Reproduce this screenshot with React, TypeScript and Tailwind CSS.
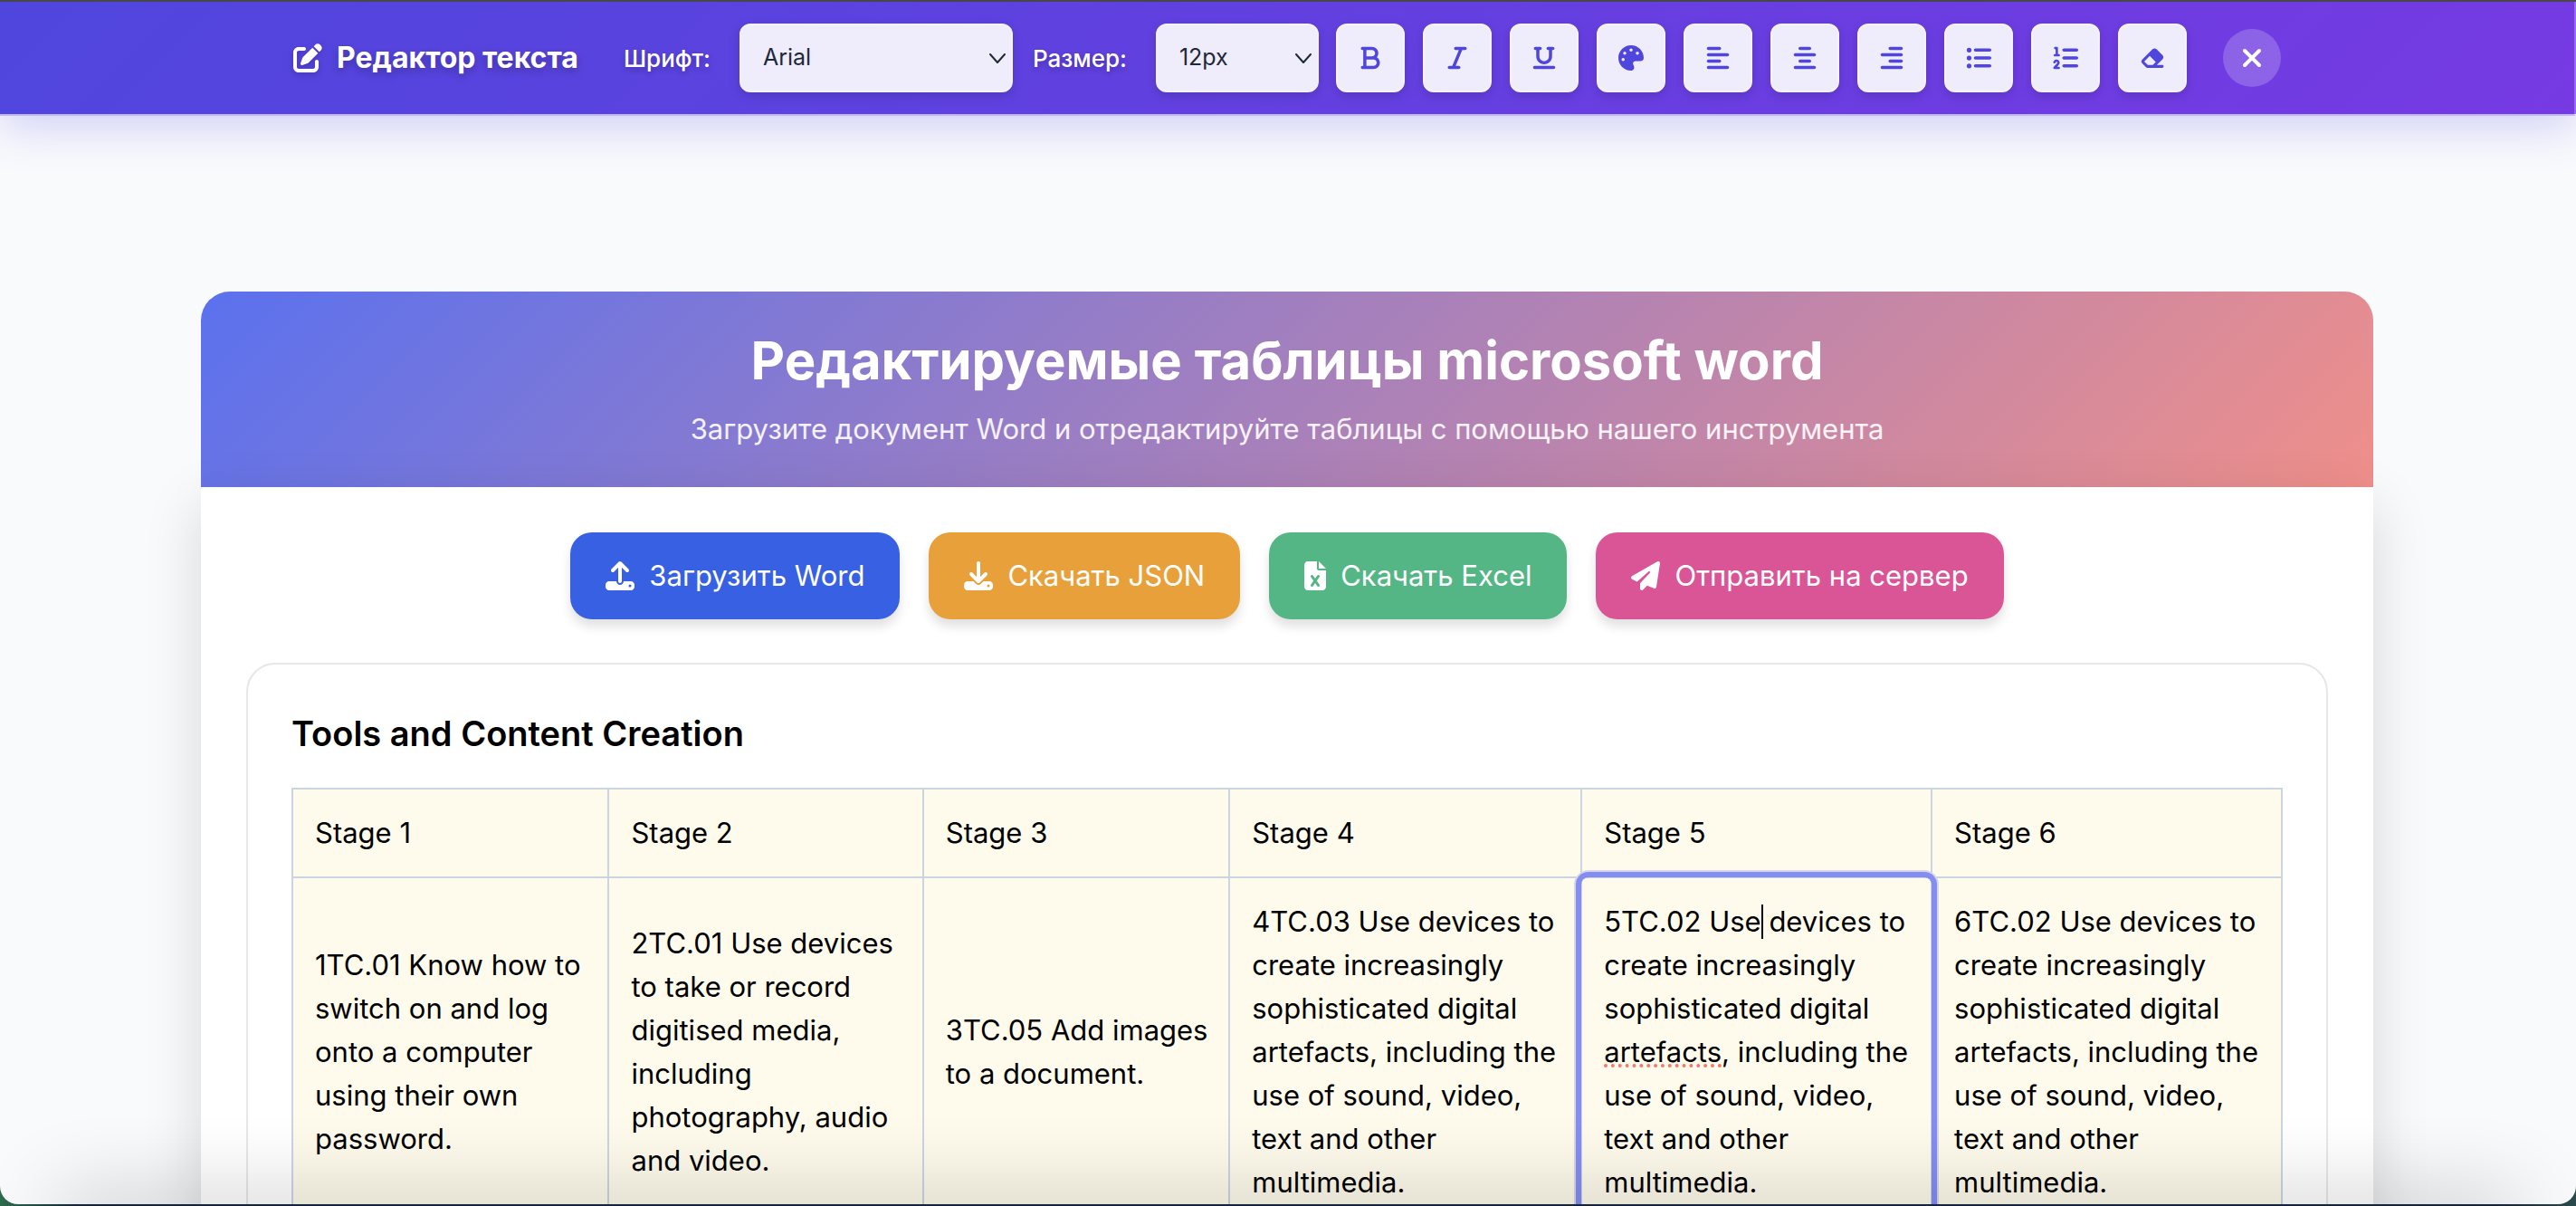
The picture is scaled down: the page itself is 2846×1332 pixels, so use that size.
import type { ComponentType, ReactNode } from "react";
import {
  FaAlignCenter,
  FaAlignLeft,
  FaAlignRight,
  FaBold,
  FaDownload,
  FaEraser,
  FaFileExcel,
  FaItalic,
  FaListOl,
  FaListUl,
  FaPalette,
  FaPaperPlane,
  FaPenToSquare,
  FaUnderline,
  FaUpload,
  FaXmark,
} from "react-icons/fa6";

type Icon = ComponentType<{ className?: string }>;

const tools: { label: string; icon: Icon }[] = [
  { label: "Полужирный", icon: FaBold },
  { label: "Курсив", icon: FaItalic },
  { label: "Подчёркнутый", icon: FaUnderline },
  { label: "Цвет текста", icon: FaPalette },
  { label: "По левому краю", icon: FaAlignLeft },
  { label: "По центру", icon: FaAlignCenter },
  { label: "По правому краю", icon: FaAlignRight },
  { label: "Маркированный список", icon: FaListUl },
  { label: "Нумерованный список", icon: FaListOl },
  { label: "Очистить форматирование", icon: FaEraser },
];

const actions: { label: string; icon: Icon; color: string; iconClass: string }[] = [
  { label: "Загрузить Word", icon: FaUpload, color: "bg-[#3860e3]", iconClass: "w-8 h-8" },
  { label: "Скачать JSON", icon: FaDownload, color: "bg-[#e8a13a]", iconClass: "w-8 h-8" },
  { label: "Скачать Excel", icon: FaFileExcel, color: "bg-[#55b685]", iconClass: "w-6 h-8" },
  { label: "Отправить на сервер", icon: FaPaperPlane, color: "bg-[#da5596]", iconClass: "w-8 h-8" },
];

const columns = [
  { title: "Stage 1", width: "w-[15.9%]" },
  { title: "Stage 2", width: "w-[15.8%]" },
  { title: "Stage 3", width: "w-[15.4%]" },
  { title: "Stage 4", width: "w-[17.7%]" },
  { title: "Stage 5", width: "w-[17.6%]" },
  { title: "Stage 6", width: "w-[17.6%]" },
];

const mediaText =
  "Use devices to create increasingly sophisticated digital artefacts, including the use of sound, video, text and other multimedia.";

function Caret() {
  return (
    <span className="relative">
      <span className="absolute top-0 left-0 h-[38px] w-[2px] bg-black" />
    </span>
  );
}

function SelectBox({
  id,
  className,
  options,
}: {
  id: string;
  className: string;
  options: string[];
}) {
  return (
    <div className={`relative ${className}`}>
      <select
        id={id}
        defaultValue={options[0]}
        className="h-[76px] w-full appearance-none rounded-xl border-2 border-[#f4f2fd] bg-[#efecfb] pl-6 text-[25px] text-gray-800 shadow-[0_4px_12px_rgba(0,0,0,0.15)]"
      >
        {options.map((o) => (
          <option key={o}>{o}</option>
        ))}
      </select>
      <svg
        viewBox="0 0 18 11"
        className="pointer-events-none absolute top-[33px] right-2 h-[11px] w-[18px]"
        fill="none"
        stroke="#1f2937"
        strokeWidth="2"
        strokeLinecap="round"
        strokeLinejoin="round"
      >
        <path d="M1 1l8 9 8-9" />
      </svg>
    </div>
  );
}

function Toolbar() {
  const label =
    "mr-8 text-[26px] font-medium text-white [text-shadow:0_3px_6px_rgba(0,0,0,0.25)]";
  return (
    <header className="relative z-10 border-r-2 border-b-2 border-r-white/25 border-b-[#c1b8f4] bg-[linear-gradient(135deg,#4f46dd,#763ae3)] bg-origin-border py-6 shadow-[0_12px_50px_rgba(79,70,229,0.24)]">
      <div className="mx-auto flex max-w-[2196px] items-center">
        <div className="mr-[50px] flex items-center gap-4 text-white">
          <FaPenToSquare className="h-8 w-8 drop-shadow-[0_3px_3px_rgba(0,0,0,0.2)]" />
          <span className="text-[32px] leading-10 font-bold [text-shadow:0_4px_8px_rgba(0,0,0,0.25)]">
            Редактор текста
          </span>
        </div>
        <label htmlFor="font" className={label}>
          Шрифт:
        </label>
        <SelectBox
          id="font"
          className="mr-[22px] w-[302px]"
          options={["Arial", "Times New Roman", "Courier New"]}
        />
        <label htmlFor="size" className={label}>
          Размер:
        </label>
        <SelectBox id="size" className="w-[180px]" options={["12px", "14px", "16px"]} />
        <div className="ml-auto flex gap-5">
          {tools.map(({ label: name, icon: ToolIcon }) => (
            <button
              key={name}
              type="button"
              aria-label={name}
              className="flex h-[76px] w-[76px] items-center justify-center rounded-xl border-2 border-[#f4f2fd] bg-[#efecfb] text-[#4f46dd] shadow-[0_4px_12px_rgba(0,0,0,0.15)]"
            >
              <ToolIcon className="h-7 w-7" />
            </button>
          ))}
        </div>
        <button
          type="button"
          aria-label="Закрыть"
          className="ml-10 flex h-16 w-16 items-center justify-center rounded-full bg-white/20 text-white"
        >
          <FaXmark className="h-8 w-8" />
        </button>
      </div>
    </header>
  );
}

function Cell({ children, focused = false }: { children: ReactNode; focused?: boolean }) {
  return (
    <td className="relative border-2 border-slate-300 bg-[#fefbec] py-6 pr-4 pl-6 align-middle">
      {children}
      {focused && (
        <span className="pointer-events-none absolute -inset-px z-10 rounded-lg shadow-[0_0_0_6px_#848df2,0_0_0_8px_#d8d6e3]" />
      )}
    </td>
  );
}

function StageTable() {
  return (
    <table className="w-full table-fixed border-collapse text-left text-[31px] leading-[48px] text-black">
      <thead>
        <tr>
          {columns.map((c) => (
            <th
              key={c.title}
              scope="col"
              className={`border-2 border-slate-300 bg-[#fefbec] p-6 font-normal ${c.width}`}
            >
              {c.title}
            </th>
          ))}
        </tr>
      </thead>
      <tbody>
        <tr>
          <Cell>1TC.01 Know how to switch on and log onto a computer using their own password.</Cell>
          <Cell>
            2TC.01 Use devices to take or record digitised media, including photography, audio and
            video.
          </Cell>
          <Cell>3TC.05 Add images to a document.</Cell>
          <Cell>4TC.03 {mediaText}</Cell>
          <Cell focused>
            5TC.02 Use
            <Caret /> devices to create increasingly sophisticated digital{" "}
            <span className="underline decoration-[#f4776b] decoration-dotted decoration-4 underline-offset-2 [text-decoration-skip-ink:none]">
              artefacts
            </span>
            , including the use of sound, video, text and other multimedia.
          </Cell>
          <Cell>6TC.02 {mediaText}</Cell>
        </tr>
      </tbody>
    </table>
  );
}

export default function App() {
  return (
    <div className="h-screen overflow-hidden bg-[linear-gradient(90deg,#2c6b4c,#12263f_3%,#12263f_97%,#2a4a4c)] pb-[2px] font-['Inter','Liberation_Sans',sans-serif]">
      <div className="relative h-full overflow-hidden rounded-b-[20px] border-t-2 border-t-[#484848] bg-[#f9fafc]">
        <Toolbar />
        <main className="px-[222px] pt-[194px] pr-[224px]">
          <div className="mx-auto max-w-[2400px]">
            <div className="rounded-t-[32px] bg-[linear-gradient(135deg,#5b71ee,#ef8f8a)] p-10 text-center text-white">
              <h1 className="mb-4 text-[58px] leading-[72px] font-bold">
                Редактируемые таблицы microsoft word
              </h1>
              <p className="text-[31px] leading-[48px] text-white/90">
                Загрузите документ Word и отредактируйте таблицы с помощью нашего инструмента
              </p>
            </div>
            <div className="bg-white p-[50px] shadow-[0_20px_60px_rgba(0,0,0,0.14)]">
              <div className="mb-12 flex justify-center gap-8">
                {actions.map(({ label, icon: ActionIcon, color, iconClass }) => (
                  <button
                    key={label}
                    type="button"
                    className={`flex h-24 items-center gap-4 rounded-3xl px-[39px] text-[31px] text-white shadow-[0_8px_12px_rgba(0,0,0,0.12)] ${color}`}
                  >
                    <ActionIcon className={iconClass} />
                    {label}
                  </button>
                ))}
              </div>
              <section className="rounded-[32px] border-2 border-gray-200 p-12">
                <h2 className="mb-8 text-[38px] leading-[56px] font-semibold text-black">
                  Tools and Content Creation
                </h2>
                <StageTable />
              </section>
            </div>
          </div>
        </main>
        <div className="pointer-events-none absolute right-[70px] -bottom-7 left-[70px] z-20 h-6 shadow-[0_0_90px_6px_rgba(0,0,0,0.3)]" />
      </div>
    </div>
  );
}
